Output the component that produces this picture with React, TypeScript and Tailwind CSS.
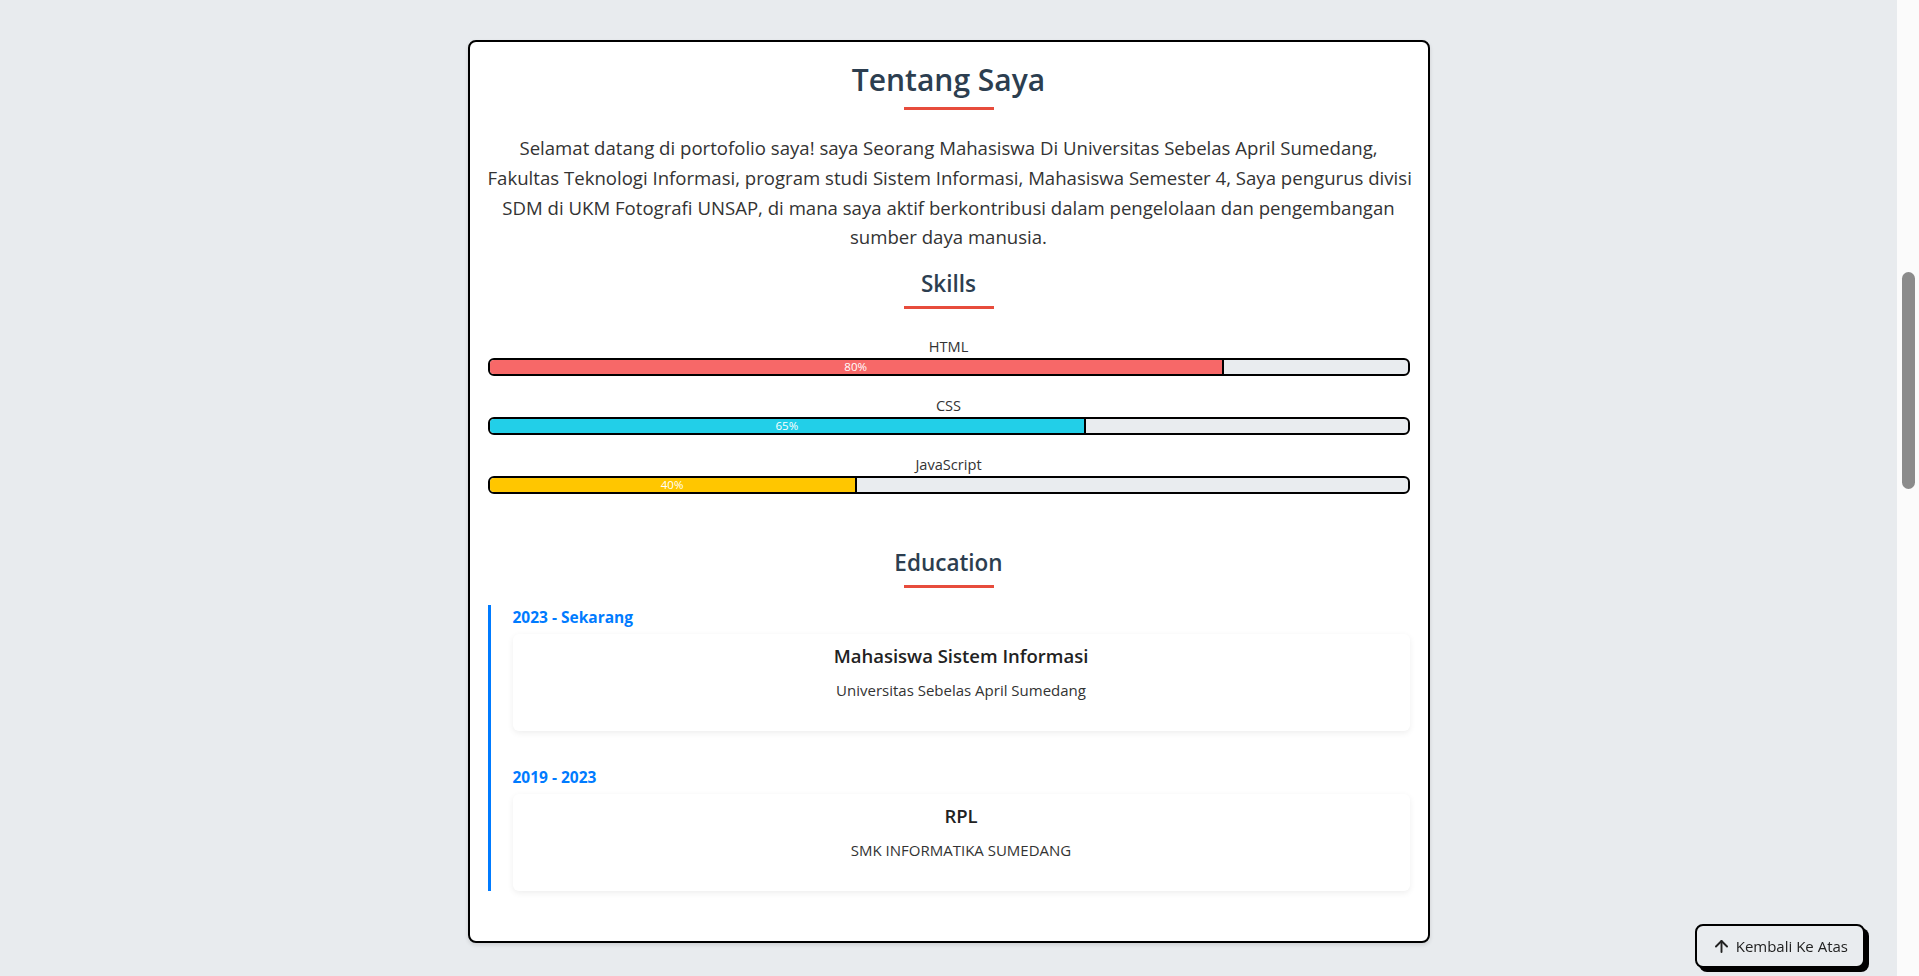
import { ArrowUp } from "lucide-react";

const skills = [
  { name: "HTML", value: 80, color: "bg-[#f76868]" },
  { name: "CSS", value: 65, color: "bg-[#22cfe8]" },
  { name: "JavaScript", value: 40, color: "bg-[#ffc600]" },
];

const education = [
  {
    period: "2023 - Sekarang",
    title: "Mahasiswa Sistem Informasi",
    place: "Universitas Sebelas April Sumedang",
  },
  {
    period: "2019 - 2023",
    title: "RPL",
    place: "SMK INFORMATIKA SUMEDANG",
  },
];

function Heading({ children, big }: { children: string; big?: boolean }) {
  return (
    <div className="flex flex-col items-center">
      <h2
        className={
          big
            ? "text-[30px] font-semibold leading-[38px] text-[#2c3e50]"
            : "text-[22.5px] font-semibold leading-[28px] text-[#2c3e50]"
        }
      >
        {children}
      </h2>
      <span className="mt-[8px] h-[3px] w-[90px] bg-[#e74c3c]" />
    </div>
  );
}

function SkillBar({ name, value, color }: { name: string; value: number; color: string }) {
  return (
    <div className="flex flex-col">
      <span className="text-center text-[14.6px] leading-[20px] text-[#333]">{name}</span>
      <div className="mt-[2px] h-[18px] w-full overflow-hidden rounded-md border-2 border-black bg-[#e9ecef]">
        <div
          className={`flex h-full items-center justify-center border-r-2 border-black ${color}`}
          style={{ width: `${value}%` }}
        >
          <span className="text-[11.5px] leading-none text-white">{value}%</span>
        </div>
      </div>
    </div>
  );
}

export default function App() {
  return (
    <div className="flex h-screen overflow-hidden bg-[#e8ebee] font-['Open_Sans',sans-serif] text-[#333]">
      <main className="flex-1 pt-[40px]">
        <section className="mx-auto w-[962px] rounded-lg border-2 border-black bg-white px-[18px] pt-[19px] pb-[50px] shadow-[0_2px_4px_rgba(0,0,0,0.12)]">
          <Heading big>Tentang Saya</Heading>
          <p className="mt-[23px] whitespace-nowrap text-center text-[18.6px] leading-[29.8px] text-[#333]">
            Selamat datang di portofolio saya! saya Seorang Mahasiswa Di Universitas Sebelas April Sumedang,
            <br />
            Fakultas Teknologi Informasi, program studi Sistem Informasi, Mahasiswa Semester 4, Saya pengurus divisi
            <br />
            SDM di UKM Fotografi UNSAP, di mana saya aktif berkontribusi dalam pengelolaan dan pengembangan
            <br />
            sumber daya manusia.
          </p>

          <div className="mt-[18px]">
            <Heading>Skills</Heading>
          </div>
          <div className="mt-[27px] flex flex-col gap-[19px]">
            {skills.map((s) => (
              <SkillBar key={s.name} {...s} />
            ))}
          </div>

          <div className="mt-[55px]">
            <Heading>Education</Heading>
          </div>
          <div className="mt-[17px] flex flex-col gap-[34px] border-l-[3px] border-[#007bff] pl-[22px]">
            {education.map((e) => (
              <div key={e.period} className="flex flex-col">
                <span className="text-[15.5px] font-bold leading-[24px] text-[#007bff]">{e.period}</span>
                <div className="mt-[5px] flex flex-col items-center rounded-md bg-white pt-[10px] pb-[31px] shadow-[0_2px_6px_rgba(0,0,0,0.07)]">
                  <h3 className="text-[18.5px] font-semibold leading-[24px] text-[#222]">{e.title}</h3>
                  <p className="mt-[12px] text-[15px] leading-[20px] text-[#333]">{e.place}</p>
                </div>
              </div>
            ))}
          </div>
        </section>
      </main>

      {/* page scrollbar */}
      <div className="w-[22px] shrink-0 bg-[#fbfbfb]">
        <div className="mt-[272px] ml-[5px] h-[217px] w-[13px] rounded-full bg-[#8b8b8b]" />
      </div>

      <button className="fixed right-[54px] bottom-[8px] flex h-[44px] items-center gap-[5px] rounded-lg border-2 border-black bg-[#e9ecef] px-[15px] text-[15px] text-[#222] shadow-[4px_4px_0_#000]">
        <ArrowUp size={19} strokeWidth={2.4} />
        Kembali Ke Atas
      </button>
    </div>
  );
}
